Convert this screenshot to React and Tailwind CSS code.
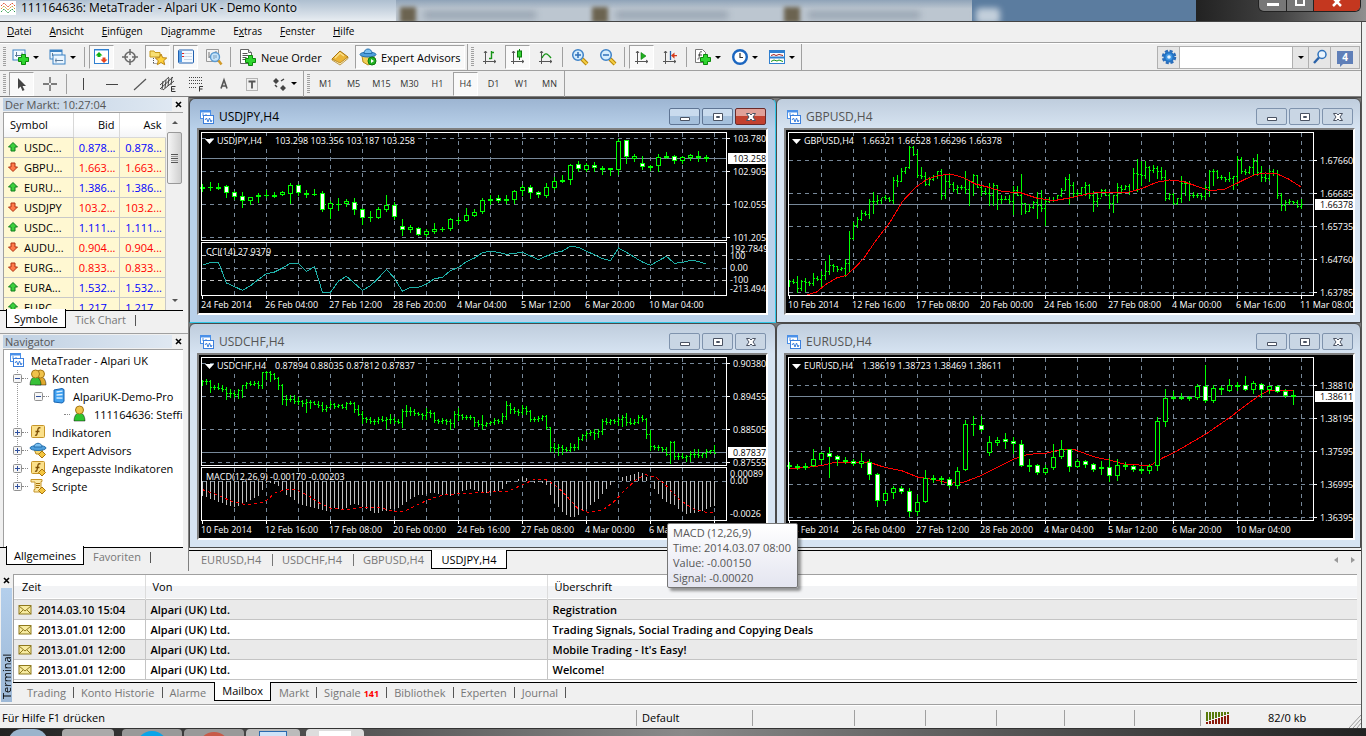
import { useState } from "react";

/* ---------- chart data ---------- */

// Chart data is kept in plotter units, three to a pixel, counted from the top of the window.
// candles: high, body top, body bottom, low, kind (u = up, d = down, x = doji)
const usdjpyCandles = [
  [258, 266, 268, 278, "x"], [252, 268, 268, 276, "x"], [256, 266, 268, 274, "x"], [262, 265, 286, 298, "d"],
  [278, 283, 296, 302, "d"], [282, 295, 308, 326, "d"], [296, 298, 308, 317, "u"], [284, 290, 298, 312, "u"],
  [276, 290, 291, 296, "x"], [282, 290, 292, 296, "x"], [280, 283, 290, 290, "u"], [256, 262, 287, 315, "u"],
  [258, 262, 285, 290, "d"], [276, 285, 287, 298, "x"], [272, 287, 287, 292, "x"], [280, 286, 335, 340, "d"],
  [310, 316, 334, 360, "u"], [300, 317, 318, 335, "x"], [304, 310, 318, 324, "u"], [300, 313, 335, 348, "d"],
  [330, 334, 360, 378, "d"], [340, 357, 358, 370, "x"], [328, 334, 359, 360, "u"], [292, 320, 335, 340, "u"],
  [312, 320, 356, 362, "d"], [362, 384, 396, 412, "d"], [382, 388, 395, 402, "u"], [388, 391, 410, 412, "d"],
  [394, 400, 410, 415, "u"], [376, 394, 402, 405, "u"], [386, 393, 394, 400, "x"], [360, 364, 392, 396, "u"],
  [356, 366, 367, 375, "x"], [330, 352, 368, 368, "u"], [332, 341, 353, 354, "u"], [300, 307, 342, 345, "u"],
  [290, 302, 309, 318, "u"], [292, 301, 310, 312, "d"], [292, 303, 310, 315, "u"], [276, 280, 305, 315, "u"],
  [262, 268, 280, 290, "u"], [262, 268, 284, 300, "d"], [280, 283, 292, 298, "d"], [255, 268, 294, 296, "u"],
  [238, 250, 269, 272, "u"], [232, 247, 249, 252, "x"], [198, 200, 245, 258, "u"], [190, 199, 214, 218, "d"],
  [196, 202, 216, 220, "u"], [192, 202, 209, 220, "d"], [204, 209, 211, 228, "x"], [210, 211, 213, 230, "x"],
  [123, 128, 216, 228, "u"], [126, 127, 177, 196, "d"], [168, 175, 182, 188, "u"], [175, 196, 206, 212, "d"],
  [200, 203, 205, 215, "x"], [168, 178, 204, 218, "u"], [163, 173, 180, 181, "u"], [172, 173, 188, 195, "d"],
  [175, 178, 188, 195, "u"], [168, 172, 179, 186, "u"], [158, 173, 175, 188, "x"], [170, 176, 182, 188, "u"],
];

const eurusdCandles = [
  [420, 429, 431, 438, "x"], [426, 432, 434, 440, "x"], [424, 431, 433, 440, "x"], [380, 412, 431, 432, "u"],
  [390, 394, 413, 424, "u"], [375, 394, 404, 465, "d"], [400, 403, 414, 430, "d"], [405, 414, 416, 424, "x"],
  [412, 416, 426, 430, "d"], [393, 418, 426, 436, "u"], [410, 419, 458, 470, "d"], [453, 457, 537, 552, "d"],
  [505, 512, 537, 542, "u"], [492, 499, 512, 528, "u"], [492, 498, 509, 512, "d"], [498, 508, 570, 582, "d"],
  [520, 539, 570, 580, "u"], [445, 469, 540, 540, "u"], [460, 469, 471, 480, "x"], [462, 469, 471, 482, "x"],
  [465, 470, 491, 496, "d"], [436, 446, 491, 498, "u"], [294, 307, 444, 445, "u"], [282, 307, 308, 338, "x"],
  [282, 310, 323, 328, "d"], [342, 360, 392, 398, "u"], [344, 353, 362, 370, "u"], [333, 352, 359, 378, "d"],
  [345, 358, 365, 394, "d"], [354, 365, 431, 432, "d"], [412, 429, 431, 446, "x"], [425, 430, 453, 456, "d"],
  [430, 437, 452, 456, "u"], [365, 404, 438, 440, "u"], [354, 380, 405, 408, "u"], [380, 382, 435, 446, "d"],
  [412, 418, 435, 436, "u"], [414, 418, 430, 434, "d"], [422, 425, 444, 446, "d"], [416, 434, 441, 455, "u"],
  [408, 434, 462, 476, "d"], [410, 430, 462, 474, "u"], [420, 430, 432, 440, "x"], [428, 432, 444, 446, "d"],
  [432, 441, 443, 452, "x"], [425, 431, 447, 452, "u"], [284, 298, 432, 445, "u"], [201, 227, 299, 312, "u"],
  [208, 224, 226, 232, "x"], [212, 225, 227, 232, "x"], [222, 225, 227, 234, "x"], [186, 193, 227, 232, "u"],
  [130, 193, 237, 240, "d"], [190, 199, 237, 240, "u"], [192, 198, 200, 216, "x"], [170, 190, 207, 207, "u"],
  [180, 189, 191, 205, "x"], [162, 190, 204, 204, "d"], [178, 184, 204, 212, "u"], [182, 187, 204, 224, "d"],
  [190, 192, 204, 214, "u"], [188, 192, 210, 210, "d"], [200, 207, 221, 224, "d"], [204, 220, 222, 246, "x"],
];

// bars: high, low, close
const gbpusdBars = [
  545, 565, 550, 543, 556, 552, 534, 583, 570, 547, 577, 548, 540, 580, 552, 548, 562, 556, 525, 562, 540, 535, 546, 542,
  518, 564, 532, 488, 542, 520, 472, 527, 500, 498, 518, 505, 503, 520, 512, 506, 515, 510, 484, 535, 495, 400, 520, 420,
  372, 424, 382, 358, 386, 364, 335, 365, 344, 340, 350, 348, 303, 360, 310, 283, 345, 310, 290, 318, 306, 300, 315, 297,
  290, 303, 300, 298, 308, 306, 237, 315, 245, 232, 264, 248, 210, 250, 220, 206, 225, 208, 144, 210, 146, 144, 172, 168,
  155, 236, 232, 206, 240, 234, 222, 262, 258, 236, 262, 242, 230, 246, 235, 218, 240, 220, 212, 302, 290, 228, 300, 250,
  225, 268, 258, 253, 280, 272, 262, 284, 268, 262, 272, 268, 218, 285, 272, 250, 320, 250, 228, 292, 232, 230, 268, 268,
  260, 290, 280, 270, 288, 285, 256, 320, 290, 254, 322, 262, 260, 332, 304, 290, 315, 304, 295, 304, 302, 290, 314, 310,
  264, 348, 275, 265, 292, 290, 228, 348, 316, 314, 345, 338, 318, 340, 328, 310, 330, 312, 282, 360, 320, 276, 338, 330,
  300, 380, 308, 298, 312, 305, 296, 308, 305, 290, 300, 292, 270, 294, 275, 236, 275, 242, 228, 318, 262, 252, 298, 285,
  275, 290, 286, 268, 290, 268, 252, 290, 262, 258, 300, 290, 280, 338, 310, 285, 325, 300, 274, 294, 277, 274, 290, 290,
  286, 330, 315, 290, 342, 292, 255, 312, 268, 262, 285, 272, 260, 274, 264, 258, 288, 280, 210, 275, 226, 184, 278, 228,
  188, 262, 230, 190, 240, 208, 204, 248, 215, 202, 222, 210, 205, 240, 218, 206, 242, 238, 215, 306, 300, 284, 302, 288,
  286, 318, 316, 300, 318, 300, 235, 312, 255, 248, 290, 256, 250, 305, 292, 282, 298, 290, 284, 296, 292, 286, 302, 295,
  262, 300, 268, 216, 295, 220, 212, 262, 220, 215, 240, 236, 230, 244, 238, 236, 250, 244, 222, 250, 240, 235, 272, 235,
  175, 260, 182, 178, 225, 218, 212, 228, 222, 205, 225, 208, 180, 232, 190, 168, 232, 222, 205, 250, 238, 228, 250, 240,
  212, 245, 220, 214, 230, 225, 215, 300, 292, 285, 335, 320, 305, 335, 312, 304, 318, 310, 308, 318, 312, 305, 328, 325,
  303, 330, 318,
];

const usdchfBars = [
  175, 190, 178, 170, 186, 178, 174, 210, 196, 188, 202, 195, 184, 200, 198, 190, 206, 200, 195, 230, 214, 202, 226, 213,
  208, 226, 215, 202, 228, 205, 188, 226, 190, 180, 198, 182, 178, 188, 186, 178, 188, 183, 177, 197, 190, 150, 198, 150,
  148, 172, 150, 146, 176, 157, 152, 170, 168, 165, 202, 190, 186, 246, 232, 218, 250, 230, 220, 236, 230, 220, 244, 236,
  225, 246, 238, 235, 252, 242, 232, 270, 240, 235, 258, 240, 236, 246, 245, 236, 256, 250, 240, 266, 262, 248, 268, 254,
  238, 256, 247, 244, 258, 252, 246, 256, 250, 245, 258, 254, 240, 262, 242, 238, 246, 243, 240, 270, 262, 250, 280, 275,
  268, 302, 288, 284, 300, 290, 286, 302, 296, 290, 306, 298, 286, 304, 290, 282, 296, 294, 284, 318, 290, 275, 302, 292,
  284, 302, 296, 290, 302, 300, 262, 314, 268, 250, 282, 266, 254, 278, 268, 262, 278, 274, 270, 280, 276, 272, 290, 278,
  258, 290, 270, 264, 284, 272, 270, 300, 294, 290, 302, 296, 288, 302, 294, 290, 305, 296, 290, 322, 302, 268, 315, 275,
  258, 294, 280, 276, 290, 284, 278, 290, 284, 280, 292, 284, 284, 312, 300, 295, 312, 305, 278, 322, 308, 300, 312, 304,
  298, 306, 300, 288, 306, 294, 290, 304, 298, 274, 302, 282, 236, 290, 248, 244, 272, 262, 256, 274, 268, 262, 278, 270,
  250, 275, 258, 252, 276, 266, 264, 298, 292, 285, 298, 292, 282, 298, 288, 280, 294, 283, 278, 320, 314, 314, 388, 375,
  362, 390, 378, 366, 398, 376, 368, 396, 380, 376, 388, 384, 362, 386, 374, 366, 384, 376, 344, 382, 350, 336, 354, 338,
  326, 348, 332, 324, 340, 330, 322, 350, 332, 320, 346, 326, 290, 335, 298, 288, 306, 300, 290, 306, 295, 290, 304, 297,
  286, 310, 292, 278, 312, 285, 272, 310, 300, 288, 305, 302, 290, 306, 300, 278, 302, 285, 280, 298, 292, 288, 348, 335,
  324, 384, 372, 368, 382, 374, 370, 384, 376, 374, 386, 380, 376, 400, 395, 358, 424, 360, 356, 410, 402, 394, 412, 402,
  394, 408, 404, 400, 416, 402, 386, 418, 396, 380, 404, 396, 382, 404, 398, 392, 406, 394, 382, 404, 388, 384, 394, 385,
  368, 392, 392,
];

const cci = [
  502, 493, 493, 555, 566, 577, 563, 544, 527, 522, 510, 496, 496, 520, 506, 583, 583, 549, 535, 556, 577, 563, 540, 514,
  541, 580, 568, 568, 558, 542, 538, 518, 508, 491, 480, 464, 460, 463, 469, 466, 463, 474, 485, 474, 464, 459, 445, 448,
  460, 470, 482, 488, 450, 463, 478, 492, 502, 488, 475, 496, 493, 487, 490, 499,
];

const macd = [
  523, 525, 530, 534, 540, 543, 548, 552, 556, 552, 545, 540, 535, 528, 522, 505, 482, 484, 486, 492, 505, 518, 525, 534,
  542, 548, 552, 556, 558, 560, 564, 566, 562, 558, 560, 560, 558, 548, 545, 550, 555, 560, 568, 574, 572, 568, 566, 562,
  560, 558, 550, 540, 530, 525, 520, 518, 515, 512, 513, 515, 518, 520, 522, 516, 513, 508, 503, 502, 505, 508, 510, 512,
  512, 510, 506, 500, 486, 480, 478, 470, 466, 468, 478, 484, 480, 482, 490, 520, 542, 556, 570, 580, 585, 585, 578, 568,
  562, 550, 540, 530, 515, 500, 490, 480, 478, 466, 463, 460, 455, 450, 452, 466, 478, 500, 515, 530, 540, 545, 550, 560,
  568, 575, 574, 572, 570, 566, 562, 556, 552,
];

// Line studies: x in pixels, y in plotter units
const gbpusdAverage = [
  [21, 590], [30, 582], [39, 560], [50, 540], [60, 532], [68, 510], [77, 482], [90, 425], [103, 375], [116, 310],
  [129, 268], [140, 245], [152, 232], [165, 229], [176, 238], [189, 258], [201, 267], [216, 280], [235, 285],
  [250, 300], [267, 308], [283, 300], [302, 287], [314, 283], [340, 284], [355, 272], [370, 253], [383, 246],
  [396, 250], [408, 262], [423, 278], [438, 274], [453, 252], [468, 230], [479, 225], [490, 227], [502, 243], [515, 268],
];

const eurusdAverage = [
  [3, 441], [24, 435], [36, 430], [48, 421], [82, 420], [97, 435], [116, 447], [131, 465], [148, 473], [163, 484],
  [178, 480], [195, 460], [212, 434], [227, 412], [241, 397], [259, 394], [276, 382], [289, 384], [308, 405],
  [324, 415], [340, 428], [364, 430], [376, 408], [388, 391], [403, 365], [420, 335], [444, 285], [460, 248],
  [473, 220], [483, 204], [508, 205],
];

const macdSignal = [
  [3, 503], [19, 520], [32, 538], [45, 547], [59, 545], [67, 535], [76, 512], [87, 502], [98, 504], [111, 525],
  [121, 545], [132, 560], [151, 562], [164, 556], [181, 558], [196, 569], [205, 568], [218, 548], [234, 527],
  [245, 518], [267, 514], [290, 510], [309, 507], [324, 487], [335, 472], [346, 472], [356, 490], [367, 522],
  [378, 558], [388, 571], [403, 565], [414, 540], [427, 500], [437, 472], [446, 458], [456, 465], [465, 485],
  [478, 528], [493, 560], [508, 572], [516, 570],
];

const longDates = ["10 Feb 2014", "12 Feb 16:00", "17 Feb 08:00", "20 Feb 00:00", "24 Feb 16:00", "27 Feb 08:00", "4 Mar 00:00", "6 Mar 16:00", "11 Mar 08:00"];
const shortDates = ["24 Feb 2014", "26 Feb 04:00", "27 Feb 12:00", "28 Feb 20:00", "4 Mar 04:00", "5 Mar 12:00", "6 Mar 20:00", "10 Mar 04:00"];

/* ---------- chart parts ---------- */

const GRID = "#778899";
const LIME = "#00ff00";

function Candles({ data, top }) {
  const y = (v) => Math.round(v / 3) - top;
  return data.map(([high, open, close, low, kind], i) => {
    const x = 3.5 + i * 8;
    const h = Math.max(y(close) - y(open), 2);
    return (
      <g key={i} stroke={LIME}>
        <path d={`M${x} ${y(high)}V${y(low) + 1}`} />
        {kind === "x" ? (
          <path d={`M${x - 2.5} ${y(open) + 0.5}h5`} strokeWidth={close - open > 1 ? 2 : 1} />
        ) : (
          <rect x={x - 2} y={y(open) + 0.5} width="4" height={h - 1} fill={kind === "d" ? "#fff" : "#000"} />
        )}
      </g>
    );
  });
}

function Bars({ data, top }) {
  const y = (v) => Math.round(v / 3) - top + 0.5;
  let d = "";
  for (let i = 0; i < data.length; i += 3) {
    const x = 3.5 + (i / 3) * 4;
    const open = i ? data[i - 1] : data[2];
    d += `M${x} ${y(data[i]) - 0.5}V${y(data[i + 1]) + 0.5}M${x - 1.5} ${y(open)}h1M${x} ${y(data[i + 2])}h1.5`;
  }
  return <path d={d} stroke={LIME} fill="none" />;
}

function Study({ points, top, color, dash }) {
  return (
    <polyline
      points={points.map(([x, v]) => `${x + 0.5},${v / 3 - top}`).join(" ")}
      fill="none"
      stroke={color}
      strokeDasharray={dash}
    />
  );
}

function PriceChart({ title, ohlc, quote, quoteY, prices, firstPrice, dates, split, children, sub, subLabels, subTitle }) {
  const bottom = split ? 110.5 : 165.5;
  const columns = Array.from({ length: 16 }, (_, i) => 35.5 + i * 32);
  return (
    <svg
      viewBox="0 0 567 183"
      className="block w-full bg-black font-['Open_Sans',sans-serif] text-[9px]"
      shapeRendering="crispEdges"
    >
      <g stroke={GRID} strokeDasharray="4 4">
        {columns.map((x) => (
          <path key={x} d={split ? `M${x} 3V110M${x} 113V165` : `M${x} 3V165`} />
        ))}
        {prices.map((p, i) => (
          <path key={p} d={`M3 ${firstPrice + i * 33}H527`} />
        ))}
      </g>
      <path d={`M3 ${quoteY}H527`} stroke={GRID} />
      {children}
      {sub}
      <rect x="2.5" y="2.5" width="525" height={bottom - 2.5} fill="none" stroke="#fff" />
      {split && <rect x="2.5" y="112.5" width="525" height="53" fill="none" stroke="#fff" />}
      <rect x="16" y="6" width="203" height="10" fill="#000" />
      <path d="M6 9h9l-4.500 5z" fill="#fff" shapeRendering="auto" />
      <g fill="#fff">
        <text x="18" y="14">{title}</text>
        <text x="76" y="14">{ohlc}</text>
        {subTitle && <text x="7" y="125">{subTitle}</text>}
        {prices.map((p, i) => (
          <g key={p}>
            <path d={`M528 ${firstPrice + i * 33}h3`} stroke="#fff" />
            <text x="534" y={firstPrice + i * 33 + 3}>{p}</text>
          </g>
        ))}
        {subLabels?.map(([label, y]) => (
          <text key={label} x="531" y={y}>{label}</text>
        ))}
        {dates.map((label, i) => (
          <g key={label}>
            <path d={`M${3.5 + i * 64} 166v3`} stroke="#fff" />
            <text x={2 + i * 64} y="178">{label}</text>
          </g>
        ))}
      </g>
      <rect x="529" y={quoteY - 5.5} width="38" height="11" fill="#fff" />
      <text x="534" y={quoteY + 3.5} fill="#000">{quote}</text>
    </svg>
  );
}

function UsdJpy() {
  return (
    <PriceChart
      split
      title="USDJPY,H4"
      ohlc="103.298 103.356 103.187 103.258"
      quote="103.258"
      quoteY={28.5}
      prices={["103.780", "102.905", "102.055", "101.205"]}
      firstPrice={8.5}
      dates={shortDates}
      subTitle="CCI(14) 27.9379"
      subLabels={[["192.7849", 122], ["100", 129], ["0.00", 141], ["-100", 153], ["-213.494", 162]]}
      sub={
        <>
          <path d="M3 125.500H527M3 150.500H527" stroke="#c0c0c0" strokeDasharray="4 4" />
          <path d="M3 138.500H527" stroke={GRID} strokeDasharray="4 4" />
          <Study points={cci.map((v, i) => [3 + i * 8, v])} top={32} color="#20b2aa" />
        </>
      }
    >
      <Candles data={usdjpyCandles} top={32} />
    </PriceChart>
  );
}

function GbpUsd() {
  return (
    <PriceChart
      title="GBPUSD,H4"
      ohlc="1.66321 1.66528 1.66296 1.66378"
      quote="1.66378"
      quoteY={74.5}
      prices={["1.67660", "1.66685", "1.65735", "1.64760", "1.63785"]}
      firstPrice={30.5}
      dates={longDates}
    >
      <Bars data={gbpusdBars} top={32} />
      <Study points={gbpusdAverage} top={32} color="#ff0000" />
    </PriceChart>
  );
}

function UsdChf() {
  return (
    <PriceChart
      split
      title="USDCHF,H4"
      ohlc="0.87894 0.88035 0.87812 0.87837"
      quote="0.87837"
      quoteY={97.5}
      prices={["0.90380", "0.89455", "0.88505", "0.87555"]}
      firstPrice={8.5}
      dates={longDates}
      subTitle="MACD(12,26,9) -0.00170 -0.00203"
      subLabels={[["0.00089", 122], ["0.00", 129], ["-0.0026", 162]]}
      sub={
        <>
          <path d="M3 126.500H527" stroke={GRID} strokeDasharray="4 4" />
          <path d={macd.map((v, i) => `M${3.5 + i * 4} 126V${Math.round(v / 3) - 33}`).join("")} stroke="#c0c0c0" />
          <Study points={macdSignal} top={33} color="#ff0000" dash="3 3" />
        </>
      }
    >
      <Bars data={usdchfBars} top={33} />
    </PriceChart>
  );
}

function EurUsd() {
  return (
    <PriceChart
      title="EURUSD,H4"
      ohlc="1.38619 1.38723 1.38469 1.38611"
      quote="1.38611"
      quoteY={41.5}
      prices={["1.38810", "1.38195", "1.37595", "1.36995", "1.36395"]}
      firstPrice={30.5}
      dates={shortDates}
    >
      <Study points={eurusdAverage} top={33} color="#ff0000" />
      <Candles data={eurusdCandles} top={33} />
    </PriceChart>
  );
}

/* ---------- icons ---------- */

function Icon({ size = 18, children }) {
  return (
    <svg width={size} height={size} viewBox={`0 0 ${size} ${size}`} fill="none" className="shrink-0">
      {children}
    </svg>
  );
}

const Plus = ({ x, y }) => (
  <path d={`M${x + 3.5} ${y + 0.5}h4v3h3v4h-3v3h-4v-3h-3v-4h3z`} fill="#2fd52f" stroke="#0a8a0a" />
);

const Caret = () => <span className="h-0 w-0 border-x-[3px] border-t-[3px] border-x-transparent border-t-black" />;

const ChartsIcon = () => (
  <Icon size={14}>
    <rect x=".5" y=".5" width="10" height="8" fill="#fff" stroke="#4a90e8" />
    <path d="M0 1.500h11" stroke="#4a90e8" strokeWidth="2" />
    <path d="M3 3v3M6 4v2" stroke="#4a90e8" />
    <rect x="3.500" y="5.500" width="10" height="8" fill="#fff" stroke="#3c7fdc" />
    <path d="M5 10l1.500-2 1.500 4 1.500-4 1.500 4 1-2" stroke="#3c7fdc" />
  </Icon>
);

const NewChartIcon = () => (
  <Icon>
    <rect x="1" y="2" width="12" height="10" fill="#f4faff" stroke="#3b82c4" />
    <path d="M4.500 4v5M3 7.500h9M10 4.500v2" stroke="#5c7b98" />
    <Plus x={6} y={6} />
  </Icon>
);
const ProfilesIcon = () => (
  <Icon>
    <rect x="1" y="2" width="12" height="9" fill="#eaf5ff" stroke="#3b82c4" />
    <path d="M1 3h12" stroke="#3b82c4" strokeWidth="2" />
    <rect x="4" y="7" width="12" height="9" fill="#eaf5ff" stroke="#3b82c4" />
    <path d="M3.500 5v3M6 12.500h8M7 10.500v4" stroke="#5c7b98" />
  </Icon>
);
const MarketIcon = () => (
  <Icon>
    <rect x="1.500" y="1.500" width="14" height="14" fill="#fff" stroke="#2f7fd0" />
    <path d="M2 2.500h13" stroke="#9cc8f0" />
    <path d="M6 4l3.500 3.500H7.500V9h-3V7.500H2.500z" fill="#10b010" />
    <path d="M11 15l-3.500-3.500h2V9.500h3v2h2z" fill="#e8431c" />
  </Icon>
);
const CrosshairIcon = () => (
  <Icon>
    <circle cx="9" cy="9" r="5" stroke="#6b6b6b" strokeWidth="1.600" />
    <path d="M9 1v6M9 11v6M1 9h6M11 9h6" stroke="#6b6b6b" strokeWidth="1.500" />
  </Icon>
);
const NavigatorIcon = () => (
  <Icon>
    <path d="M1 3h4l1 1.500h5V9H1z" fill="#f8df72" stroke="#c79a1c" />
    <path d="M4.500 10v6M4.500 15.500h4" stroke="#555" strokeDasharray="1 1" />
    <path d="M12 6l1.700 3.700 4 .3-3 2.700 1 4-3.700-2.200L8.300 16.700l1-4-3-2.700 4-.3z" fill="#ffd23c" stroke="#b98312" />
  </Icon>
);
const TerminalIcon = () => (
  <Icon>
    <rect x="1.500" y="2" width="15" height="13" rx="1" fill="#f4f9ff" stroke="#1f5fae" />
    <path d="M2 3h3v11H2z" fill="#5aa0e6" />
    <path d="M7 5.500h8M7 8.500h8M7 11.500h8" stroke="#c9d6e6" />
    <path d="M5 5.500h2M5 8.500h2" stroke="#e02020" />
  </Icon>
);
const TesterIcon = () => (
  <Icon>
    <path d="M1.500 1.500h12v12h-12z" fill="#f3f3f3" stroke="#999" />
    <path d="M4 4v6M4 9h4M11 3v4" stroke="#777" />
    <circle cx="10" cy="9" r="4.500" fill="#c4e4fb" stroke="#5c9ad0" strokeWidth="1.400" />
    <path d="M9 7v4M11 7v3" stroke="#7d9ab5" />
    <path d="M13.500 12.500l3 4" stroke="#d19a2a" strokeWidth="2.500" />
  </Icon>
);
const OrderIcon = () => (
  <Icon>
    <path d="M1.500 1.500h8l3 3v11h-11z" fill="#fff" stroke="#666" />
    <path d="M9.500 1.500v3h3" fill="#ddd" stroke="#666" />
    <path d="M3.500 5.500h5M3.500 7.500h6M3.500 9.500h4M3.500 11.500h3" stroke="#555" />
    <Plus x={6} y={7} />
  </Icon>
);
const EditorIcon = () => (
  <Icon>
    <path d="M1 11L9 3l8 6-8 7z" fill="#eab437" stroke="#a8740c" />
    <path d="M1 11l8 4 8-6v1.500L9 17 1 12z" fill="#fff4c8" stroke="#a8740c" strokeWidth=".7" />
    <path d="M4 10l5-5 4 3" stroke="#fbe08a" strokeWidth="1.500" />
  </Icon>
);
const ExpertIcon = () => (
  <Icon>
    <path d="M3 8h12l-1 6-5 3-5-3z" fill="#f3cf55" stroke="#b98a1c" />
    <ellipse cx="9" cy="6.500" rx="8" ry="2.500" fill="#4f9fdc" stroke="#2470ad" />
    <path d="M5 5.500c0-6 8-6 8 0z" fill="#7cc0f0" stroke="#2470ad" />
    <circle cx="13" cy="13" r="4" fill="#22b022" stroke="#0c7a0c" />
    <path d="M12 11l3 2-3 2z" fill="#fff" />
  </Icon>
);
const Axes = () => <path d="M4.500 3v13M2 13.500h13M3 5l1.500-2L6 5M13 12l2 1.500-2 1.500" stroke="#555" />;
const BarsIcon = () => (
  <Icon><Axes /><path d="M10.500 3v8M10.500 4.500H13M8 10.500h2.500" stroke="#179417" strokeWidth="1.400" /></Icon>
);
const CandleIcon = () => (
  <Icon><Axes /><path d="M10.500 1v11" stroke="#0a7a0a" /><rect x="8.500" y="3" width="4" height="6" fill="#34d034" stroke="#0a7a0a" /></Icon>
);
const LineIcon = () => (
  <Icon><Axes /><path d="M5 10c3-6 5-5 9 0" stroke="#179417" strokeWidth="1.400" /></Icon>
);
const ZoomIcon = ({ plus }) => (
  <Icon>
    <path d="M11 11l5 5" stroke="#b8860b" strokeWidth="4" />
    <path d="M11 11l5 5" stroke="#f5cf45" strokeWidth="2" />
    <circle cx="7" cy="7" r="5.300" fill="#d5edfd" stroke="#3f83c8" strokeWidth="1.500" />
    <path d={plus ? "M4 7h6M7 4v6" : "M4 7h6"} stroke="#2f6fb8" strokeWidth="1.500" />
  </Icon>
);
const ScrollIcon = () => (
  <Icon><Axes /><path d="M8 4.500v7l5-3.500z" fill="#1eb01e" stroke="#0a7a0a" strokeWidth=".6" /></Icon>
);
const ShiftIcon = () => (
  <Icon><Axes /><path d="M9.500 3v9" stroke="#1f5fae" strokeWidth="1.300" /><path d="M10 7.500l3.500-3V7H16v1.200h-2.500v2.500z" fill="#d43a1a" /></Icon>
);
const IndicatorIcon = () => (
  <Icon>
    <path d="M1.500 1.500h7l3 3v10h-10z" fill="#fff" stroke="#777" />
    <path d="M8 4c-2-1-2 0-2.500 3S5 12 3.500 11M4 7h4" stroke="#444" />
    <Plus x={6} y={6} />
  </Icon>
);
const ClockIcon = () => (
  <Icon>
    <circle cx="9" cy="9" r="6.800" fill="#fff" stroke="#1b66c0" strokeWidth="2.400" />
    <path d="M9 5v4.500h3" stroke="#333" strokeWidth="1.200" />
  </Icon>
);
const TemplateIcon = () => (
  <Icon>
    <rect x="1.500" y="2.500" width="15" height="13" fill="#fff" stroke="#2f7fd0" />
    <path d="M2 4h14M2 9.500h14" stroke="#2f7fd0" strokeWidth="2" />
    <path d="M3 7.500l3-1 2 1 3-1 4 1" stroke="#a02020" />
    <path d="M3 13.500l3-1.500 3 1 2-1 4 1.500" stroke="#179417" />
  </Icon>
);

const CursorIcon = () => <Icon><path d="M5 3v11l2.600-2.400 1.900 4.300 2-1-2-4H13z" fill="#444" /></Icon>;
const CrossIcon = () => <Icon><path d="M9 2v6M9 10v6M2 9h6M10 9h6" stroke="#555" strokeWidth="1.300" /></Icon>;
const VLineIcon = () => <Icon><path d="M8.500 3v12" stroke="#444" /></Icon>;
const HLineIcon = () => <Icon><path d="M3 9.500h12" stroke="#444" /></Icon>;
const TrendIcon = () => <Icon><path d="M3 15L15 4" stroke="#555" strokeWidth="1.200" /></Icon>;
const ChannelIcon = () => (
  <Icon>
    <path d="M1 14L14 2M1 10L10 2M4 15L15 6M4 6l-1 9M7 5L6 13M10 3L9 11M13 2l-1 8" stroke="#444" />
    <path d="M16.500 11.500h-4v5h4M12.500 14h3" stroke="#333" />
  </Icon>
);
const FiboIcon = () => (
  <Icon>
    <path d="M2 2.500h14M2 5.500h14M2 8.500h14M2 12.500h8" stroke="#444" strokeDasharray="1 1" />
    <path d="M16 11.500h-3.500v5M12.500 14h3" stroke="#333" />
  </Icon>
);
const LetterIcon = () => <Icon><path d="M6 13.500L9 5l3 8.500M7 11h4" stroke="#555" strokeWidth="1.600" /></Icon>;
const LabelIcon = () => (
  <Icon>
    <rect x="3.500" y="3.500" width="11" height="12" stroke="#777" strokeDasharray="1 1" />
    <path d="M5.500 6.500h7M9 6.500v7" stroke="#555" strokeWidth="1.800" />
  </Icon>
);
const ArrowsIcon = () => (
  <Icon>
    <path d="M6 3l3 3-3 3-3-3zM13 10l3 3-3 3-3-3z" fill="#444" />
    <path d="M7 12l-2-2M11 6l3-2" stroke="#444" strokeWidth="1.500" />
  </Icon>
);

const UpArrow = () => (
  <Icon size={12}><path d="M6 1.500l4.500 4.500H8v4H4V6H1.500z" fill="#3ccf3c" stroke="#0c7d1c" /></Icon>
);
const DownArrow = () => (
  <Icon size={12}><path d="M6 10.500L1.500 6H4V2h4v4h2.500z" fill="#ff7a4a" stroke="#b03010" /></Icon>
);

const Person = ({ x, shirt }) => (
  <>
    <path d={`M${x} 16c0-11 11-11 11 0z`} fill={shirt} stroke="#00000070" />
    <circle cx={x + 5.5} cy="5" r="4" fill="#f0c24a" stroke="#a57616" />
  </>
);
const AccountsIcon = () => <Icon><Person x={6} shirt="#e0a92c" /><Person x={1} shirt="#38c038" /></Icon>;
const AccountIcon = () => <Icon><Person x={3} shirt="#2fc42f" /></Icon>;
const ServerIcon = () => (
  <Icon>
    <path d="M4 3l8-1.500 2 1v12L12 16l-8-1z" fill="#3fa0f0" stroke="#1763b0" />
    <path d="M6.500 5l6-.8M6.500 8l6-.5M6.500 11l6 .2" stroke="#d8eeff" strokeWidth="1.300" />
  </Icon>
);
const FunctionIcon = ({ badge }) => (
  <Icon>
    <rect x="2.500" y="2.500" width="13" height="12" rx="1" fill="#fbe08a" stroke="#c6952a" />
    <path d="M11.500 5c-2.500-1-2.500 1-3 3.500S8 13 6 12M6.500 8.500h4" stroke="#7b4d05" strokeWidth="1.300" />
    {badge && <path d="M13 10l3.500 3.500L13 17l-3.500-3.500z" fill="#f4c640" stroke="#a8740c" />}
  </Icon>
);
const AdvisorIcon = () => (
  <Icon>
    <path d="M5 8h9l-2 5H7z" fill="#f5d877" stroke="#b98a1c" />
    <ellipse cx="9" cy="7" rx="8" ry="2.500" fill="#4f9fdc" stroke="#2470ad" />
    <path d="M5 6c0-5 8-5 8 0z" fill="#7cc0f0" stroke="#2470ad" />
    <path d="M13 10l3.500 3.500L13 17l-3.500-3.500z" fill="#f4c640" stroke="#a8740c" />
  </Icon>
);
const ScriptIcon = () => (
  <Icon>
    <path d="M2 2.500h11v2H12V13h3v2H5v-2.500h1V5H2z" fill="#fbe9a8" stroke="#c6952a" />
    <path d="M7 6.500h4M7 8.500h4M7 10.500h3" stroke="#a8740c" />
    <path d="M13 10l3.500 3.500L13 17l-3.500-3.500z" fill="#f4c640" stroke="#a8740c" />
  </Icon>
);
const MailIcon = () => (
  <Icon size={14}>
    <rect x="1" y="3.500" width="12" height="8.500" fill="#f7eba2" stroke="#8f7a1e" />
    <path d="M1 4l6 5 6-5M1 12l4-4M13 12L9 8" stroke="#8f7a1e" />
  </Icon>
);
const GearIcon = () => (
  <Icon>
    <circle cx="9" cy="9" r="6" stroke="#2b6cb8" strokeWidth="2.500" strokeDasharray="3 1.700" />
    <circle cx="9" cy="9" r="4.500" fill="#3f97e4" stroke="#2473c4" strokeWidth="2" />
    <circle cx="9" cy="9" r="1.800" fill="#e6f3ff" />
  </Icon>
);
const SearchIcon = () => (
  <Icon>
    <path d="M8 9.500L3 15" stroke="#2b62a8" strokeWidth="2.400" />
    <circle cx="11" cy="6.500" r="4" fill="#eaf5ff" stroke="#2f73bd" strokeWidth="1.500" />
  </Icon>
);

/* ---------- toolbar ---------- */

const Grip = () => (
  <span className="ml-[3px] h-5 w-[3px] bg-[repeating-linear-gradient(#a0a0a0_0_1px,#f0f0f0_1px_2px)]" />
);
const Sep = () => <span className="mx-px h-5 w-px bg-[#a0a0a0]" />;

function Tool({ label, pressed, wide, children }) {
  return (
    <button
      type="button"
      aria-label={label}
      className={`flex h-6 shrink-0 items-center border ${wide ? "w-[34px] justify-between pl-[2px] pr-[3px]" : "w-[25px] justify-center"} ${
        pressed ? "border-[#a0a0a0] border-r-white border-b-white bg-[#f9f9f9]" : "border-transparent"
      }`}
    >
      {children}
      {wide && <Caret />}
    </button>
  );
}

const toolbarGroup = "flex h-[26px] items-center gap-[3px] border-r border-[#a0a0a0]";

function StandardToolbar() {
  return (
    <div className="flex h-[27px] items-center border-t border-white">
      <div className={`${toolbarGroup} pr-[2px]`}>
        <Grip />
        <Tool label="Neuer Chart" wide><NewChartIcon /></Tool>
        <Tool label="Profile" wide><ProfilesIcon /></Tool>
        <Sep />
        <Tool label="Marktübersicht" pressed><MarketIcon /></Tool>
        <Tool label="Datenfenster"><CrosshairIcon /></Tool>
        <Tool label="Navigator" pressed><NavigatorIcon /></Tool>
        <Tool label="Terminal" pressed><TerminalIcon /></Tool>
        <Tool label="Strategietester"><TesterIcon /></Tool>
        <Sep />
        <button type="button" className="flex h-6 w-[89px] items-center gap-1 pl-1">
          <OrderIcon />
          <span className="whitespace-nowrap">Neue Order</span>
        </button>
        <Tool label="MetaEditor"><EditorIcon /></Tool>
        <button
          type="button"
          className="flex h-6 w-[110px] items-center gap-1 border border-[#a0a0a0] border-r-white border-b-white bg-[#f9f9f9] pl-[3px]"
        >
          <ExpertIcon />
          <span className="whitespace-nowrap">Expert Advisors</span>
        </button>
      </div>
      <div className={`${toolbarGroup} pr-[2px]`}>
        <Grip />
        <Tool label="Balken"><BarsIcon /></Tool>
        <Tool label="Kerzen" pressed><CandleIcon /></Tool>
        <Tool label="Linie"><LineIcon /></Tool>
        <Sep />
        <Tool label="Vergrößern"><ZoomIcon plus /></Tool>
        <Tool label="Verkleinern"><ZoomIcon /></Tool>
        <Sep />
        <Tool label="Auto-Scroll" pressed><ScrollIcon /></Tool>
        <Tool label="Chart verschieben"><ShiftIcon /></Tool>
        <Sep />
        <Tool label="Indikatoren" wide><IndicatorIcon /></Tool>
        <Tool label="Zeiträume" wide><ClockIcon /></Tool>
        <Tool label="Vorlagen" wide><TemplateIcon /></Tool>
      </div>
      <div className="mr-px ml-auto flex h-[23px] border border-[#b0b0b0] bg-[#e6e6e6]">
        <button type="button" aria-label="Einstellungen" className="flex w-[21px] items-center justify-center"><GearIcon /></button>
        <input aria-label="Suche" className="w-[114px] border-x border-[#b0b0b0] bg-white px-1 outline-none" />
        <button type="button" aria-label="Suchverlauf" className="flex w-[15px] items-center justify-center"><Caret /></button>
        <button type="button" aria-label="Suchen" className="flex w-[23px] items-center justify-center border-x border-[#b0b0b0]"><SearchIcon /></button>
        <button type="button" className="flex w-[28px] items-center justify-center">
          <span className="relative h-[13px] w-4 bg-[#5f7fb8] text-[10px] leading-[13px] font-bold text-white">
            4
            <span className="absolute top-full left-[3px] h-0 w-0 border-t-[3px] border-r-[3px] border-t-[#5f7fb8] border-r-transparent" />
          </span>
        </button>
      </div>
    </div>
  );
}

function DrawingToolbar() {
  const [period, setPeriod] = useState("H4");
  return (
    <div className="flex h-[26px] items-center border-t border-[#a0a0a0]">
      <div className={`${toolbarGroup} pr-[2px]`}>
        <Grip />
        <Tool label="Zeiger" pressed><CursorIcon /></Tool>
        <Tool label="Fadenkreuz"><CrossIcon /></Tool>
        <Sep />
        <Tool label="Vertikale Linie"><VLineIcon /></Tool>
        <Tool label="Horizontale Linie"><HLineIcon /></Tool>
        <Tool label="Trendlinie"><TrendIcon /></Tool>
        <Tool label="Kanal"><ChannelIcon /></Tool>
        <Tool label="Fibonacci"><FiboIcon /></Tool>
        <Tool label="Text"><LetterIcon /></Tool>
        <Tool label="Textmarke"><LabelIcon /></Tool>
        <Tool label="Pfeile" wide><ArrowsIcon /></Tool>
      </div>
      <div className={`${toolbarGroup} pr-[2px]`}>
        <Grip />
        {["M1", "M5", "M15", "M30", "H1", "H4", "D1", "W1", "MN"].map((p) => (
          <button
            key={p}
            type="button"
            onClick={() => setPeriod(p)}
            className={`flex h-6 w-[25px] items-center justify-center border text-[9px] text-[#333] ${
              p === period ? "border-[#a0a0a0] border-r-white border-b-white bg-[#f9f9f9]" : "border-transparent"
            }`}
          >
            {p}
          </button>
        ))}
      </div>
    </div>
  );
}

/* ---------- side panels ---------- */

const CloseButton = () => (
  <button type="button" aria-label="Schließen" className="flex h-3 w-3 shrink-0 items-center justify-center">
    <svg width="7" height="7" viewBox="0 0 7 7"><path d="M1 1l5 5M6 1L1 6" stroke="#000" strokeWidth="1.600" /></svg>
  </button>
);

function PanelHeader({ title }) {
  return (
    <div className="flex h-[15px] items-center pr-1 pl-[3px]">
      <h2 className="flex h-[13px] flex-1 items-center bg-linear-to-r from-[#bfd0e2] to-[#dfe8f2] pl-[2px] text-[#555]">{title}</h2>
      <CloseButton />
    </div>
  );
}

function PanelTabs({ active, other }) {
  return (
    <div className="flex h-[18px]">
      <span className="w-[6px] border-t border-black" />
      <button type="button" className="-mt-px border border-t-0 border-black bg-white px-[7px] pt-px">{active}</button>
      <button type="button" className="border-t border-black pl-[9px] text-[#777]">{other}</button>
      <span className="mr-[5px] flex-1 border-t border-black pt-[4px] pl-[9px]">
        <span className="block h-[11px] w-px bg-[#555]" />
      </span>
    </div>
  );
}

const quotes = [
  ["USDC...", "0.878...", true],
  ["GBPU...", "1.663...", false],
  ["EURU...", "1.386...", true],
  ["USDJPY", "103.2...", false],
  ["USDC...", "1.111...", true],
  ["AUDU...", "0.904...", false],
  ["EURG...", "0.833...", false],
  ["EURA...", "1.532...", true],
  ["EURC...", "1.217...", true],
];

function MarketWatch() {
  return (
    <section className="flex flex-col pb-[5px]">
      <PanelHeader title="Der Markt: 10:27:04" />
      <div className="mr-[5px] ml-[3px] flex h-[198px] overflow-hidden border-t border-l border-[#a0a0a0] bg-white">
        <table className="h-[205px] flex-1 table-fixed border-collapse self-start">
          <thead>
            <tr className="h-6 bg-linear-to-b from-white from-50% to-[#f4f5f7]">
              <th className="w-[69px] border-b border-[#c8c8c8] pl-[6px] text-left font-normal">Symbol</th>
              <th className="w-[46px] border-b border-l border-[#d8d8d8] pr-1 text-right font-normal">Bid</th>
              <th className="border-b border-l border-[#d8d8d8] pr-1 text-right font-normal">Ask</th>
            </tr>
          </thead>
          <tbody>
            {quotes.map(([symbol, price, up], i) => (
              <tr key={i} className="h-5 border-b border-[#c8c8c8] bg-[#fff8d2]">
                <td className="whitespace-nowrap">
                  <span className="flex items-center gap-[5px] pl-[3px]">{up ? <UpArrow /> : <DownArrow />}{symbol}</span>
                </td>
                <td className={`border-l border-[#c8c8c8] pr-[3px] text-right ${up ? "text-[#0000ff]" : "text-[#ff0000]"}`}>{price}</td>
                <td className={`border-x border-[#c8c8c8] pr-[3px] text-right ${up ? "text-[#0000ff]" : "text-[#ff0000]"}`}>{price}</td>
              </tr>
            ))}
          </tbody>
        </table>
        <div className="flex w-[17px] flex-col items-center bg-[#f0f0f0] py-2">
          <span className="border-x-[3px] border-b-[3px] border-x-transparent border-b-[#555]" />
          <span className="mt-2 flex h-[52px] w-[15px] flex-col items-center justify-center gap-px rounded-xs border border-[#999] bg-linear-to-r from-[#f5f5f5] to-[#cfcfcf]">
            <span className="h-px w-[7px] bg-[#555]" />
            <span className="h-px w-[7px] bg-[#999]" />
            <span className="h-px w-[7px] bg-[#555]" />
            <span className="h-px w-[7px] bg-[#999]" />
            <span className="h-px w-[7px] bg-[#555]" />
          </span>
          <span className="mt-auto border-x-[3px] border-t-[3px] border-x-transparent border-t-[#555]" />
        </div>
      </div>
      <PanelTabs active="Symbole" other="Tick Chart" />
    </section>
  );
}

const Expander = ({ open }) => (
  <Icon size={9}>
    <rect x=".5" y=".5" width="8" height="8" rx="1" fill="#f6f6f6" stroke="#919191" />
    <path d={open ? "M2 4.500h5" : "M2 4.500h5M4.500 2v5"} stroke="#2e4f9e" />
  </Icon>
);
const Dots = () => <span className="w-[6px] border-t border-dotted border-[#888]" />;

function TreeRow({ open, icon, label, indent }) {
  return (
    <li className={`flex h-[18px] items-center whitespace-nowrap ${indent}`}>
      {open !== undefined && <Expander open={open} />}
      <Dots />
      <span className="mr-[5px] ml-px">{icon}</span>
      {label}
    </li>
  );
}

function Navigator() {
  return (
    <section className="flex flex-1 flex-col border-t border-[#a0a0a0] pb-[6px]">
      <PanelHeader title="Navigator" />
      <ul className="mr-[5px] ml-[3px] flex-1 overflow-hidden border-t border-l border-[#a0a0a0] bg-white bg-[repeating-linear-gradient(#999_0_1px,#fff_1px_2px)] bg-[length:1px_118px] bg-[position:13px_20px] bg-no-repeat pt-px">
        <li className="flex h-[18px] items-center gap-[7px] pl-[6px]"><ChartsIcon />MetaTrader - Alpari UK</li>
        <TreeRow indent="pl-[9px]" open icon={<AccountsIcon />} label="Konten" />
        <TreeRow indent="pl-[30px]" open icon={<ServerIcon />} label="AlpariUK-Demo-Pro" />
        <TreeRow indent="pl-[60px]" icon={<AccountIcon />} label="111164636: Steffi" />
        <TreeRow indent="pl-[9px]" open={false} icon={<FunctionIcon />} label="Indikatoren" />
        <TreeRow indent="pl-[9px]" open={false} icon={<AdvisorIcon />} label="Expert Advisors" />
        <TreeRow indent="pl-[9px]" open={false} icon={<FunctionIcon badge />} label="Angepasste Indikatoren" />
        <TreeRow indent="pl-[9px]" open={false} icon={<ScriptIcon />} label="Scripte" />
      </ul>
      <PanelTabs active="Allgemeines" other="Favoriten" />
    </section>
  );
}

/* ---------- chart windows ---------- */

function WindowButton({ label, danger, muted, children }) {
  return (
    <button
      type="button"
      aria-label={label}
      className={`flex h-[17px] w-[31px] items-center justify-center rounded-xs border ${
        danger
          ? "border-[#6a2a2a] bg-linear-to-b from-[#e0a098] from-50% to-[#c2412f] to-50%"
          : muted
            ? "border-[#7f93ad] bg-[#c9d6e4]"
            : "border-[#5f7594] bg-linear-to-b from-[#c9dbee] from-50% to-[#a5c0dc] to-50%"
      }`}
    >
      <svg width="12" height="10" viewBox="0 0 12 10" fill="#fff" stroke="#4a5262">{children}</svg>
    </button>
  );
}

function ChartWindow({ title, active, last, children }) {
  return (
    <section
      className={`flex flex-col rounded-t-md border border-[#4a4a4a] pl-[7px] ${last ? "pr-[5px]" : "pr-[7px]"} pb-[7px] ${
        active ? "border-r-[#30c8e8] border-b-[#30c8e8] bg-linear-to-b from-[#9db5d2] to-[#b9d1ea] to-[30px]" : "bg-linear-to-b from-[#bfcddd] to-[#d7e4f2] to-[30px]"
      }`}
    >
      <header className="flex h-[29px] items-center pt-[6px] pr-[2px] pl-[3px]">
        <ChartsIcon />
        <h2 className={`ml-[5px] flex-1 text-[12px] ${active ? "text-black" : "text-[#555]"}`}>{title}</h2>
        <div className="flex gap-[2px]">
          <WindowButton label="Minimieren" muted={!active}><path d="M1.500 5.500h9v3h-9z" /></WindowButton>
          <WindowButton label="Maximieren" muted={!active}><path d="M1.500 1.500h9v7h-9zM4.500 4.500h3v1h-3z" /></WindowButton>
          <WindowButton label="Schließen" muted={!active} danger={active}>
            <path d="M1.500 1.500h3L6 3l1.500-1.500h3L8 5l2.500 3.500h-3L6 7 4.500 8.500h-3L4 5z" />
          </WindowButton>
        </div>
      </header>
      <div className="border-2 border-t-[#808080] border-r-white border-b-white border-l-[#808080]">{children}</div>
    </section>
  );
}

function Workspace() {
  return (
    <main className="flex min-w-0 flex-1 flex-col border-l border-[#808080]">
      <div className="grid grid-cols-[587fr_585fr] border-t border-[#4a4a4a] bg-[#777]">
        <ChartWindow title="USDJPY,H4" active><UsdJpy /></ChartWindow>
        <ChartWindow title="GBPUSD,H4" last><GbpUsd /></ChartWindow>
        <ChartWindow title="USDCHF,H4"><UsdChf /></ChartWindow>
        <ChartWindow title="EURUSD,H4" last><EurUsd /></ChartWindow>
      </div>
      <nav className="mt-[2px] flex h-[21px] border-t border-black pl-[3px] text-[#777]">
        {["EURUSD,H4", "USDCHF,H4", "GBPUSD,H4"].map((t, i) => (
          <button key={t} type="button" className="flex w-[81px] items-center justify-between pb-[3px] pl-[9px]">
            {t}
            {i < 2 && <span className="h-3 w-px bg-[#777]" />}
          </button>
        ))}
        <button type="button" className="-mt-px -ml-[4px] mb-[2px] w-[76px] border border-t-0 border-black bg-white text-black">USDJPY,H4</button>
        <span className="ml-auto flex items-center gap-[13px] pr-[6px] pb-[2px]">
          <span className="border-y-[3px] border-r-[4px] border-y-transparent border-r-[#999]" />
          <span className="border-y-[3px] border-l-[4px] border-y-transparent border-l-[#999]" />
        </span>
      </nav>
    </main>
  );
}

function MacdTooltip() {
  return (
    <div
      role="tooltip"
      className="absolute top-[523px] left-[667px] h-[65px] w-[131px] rounded-xs border border-[#767676] bg-linear-to-b from-white to-[#e4e5f0] pt-px pl-[5px] text-[11px] leading-[15px] whitespace-nowrap text-[#575757] shadow-[3px_3px_3px_rgba(0,0,0,0.4)]"
    >
      <p>MACD (12,26,9)</p>
      <p>Time: 2014.03.07 08:00</p>
      <p>Value: -0.00150</p>
      <p>Signal: -0.00020</p>
    </div>
  );
}

/* ---------- terminal ---------- */

const mails = [
  ["2014.03.10 15:04", "Registration"],
  ["2013.01.01 12:00", "Trading Signals, Social Trading and Copying Deals"],
  ["2013.01.01 12:00", "Mobile Trading - It's Easy!"],
  ["2013.01.01 12:00", "Welcome!"],
];

function TerminalTab({ label, badge }) {
  return (
    <button type="button" className="flex items-center text-[#777]">
      {label}
      {badge && <span className="pt-[3px] pl-[3px] text-[9px] font-bold text-[#ff0000]">{badge}</span>}
    </button>
  );
}
const Bar = () => <span className="mx-[7px] h-[11px] w-px self-center bg-[#555]" />;

function Terminal() {
  return (
    <section className="flex h-[134px] border-b border-[#a0a0a0] pt-[3px] pb-px">
      <div className="flex w-[13px] flex-col items-center">
        <CloseButton />
        <h2 className="mt-[2px] mb-px flex w-[11px] flex-1 rotate-180 items-center bg-linear-to-b from-[#9db8d6] to-[#b4cfec] pt-[3px] text-black [writing-mode:vertical-rl]">
          Terminal
        </h2>
      </div>
      <div className="mr-1 flex min-w-0 flex-1 flex-col">
        <div className="border-t border-l border-[#a0a0a0] bg-white pb-[2px]">
          <table className="w-full table-fixed border-collapse">
            <thead>
              <tr className="h-6 border-b border-[#c8c8c8] bg-linear-to-b from-white from-50% to-[#f2f3f5] to-50% text-left">
                <th className="w-[131px] pl-2 font-normal">Zeit</th>
                <th className="w-[402px] border-l border-[#dcdcdc] pl-[7px] font-normal">Von</th>
                <th className="border-l border-[#dcdcdc] pl-[7px] font-normal">Überschrift</th>
              </tr>
            </thead>
            <tbody className="font-semibold">
              {mails.map(([time, subject]) => (
                <tr key={subject} className="h-5 border-b border-[#c4c4c4] odd:bg-[#eaeaea]">
                  <td><span className="flex items-center gap-[6px] pl-[4px]"><MailIcon />{time}</span></td>
                  <td className="border-l border-[#c4c4c4] pl-[5px]">Alpari (UK) Ltd.</td>
                  <td className="border-l border-[#c4c4c4] pl-[5px]">{subject}</td>
                </tr>
              ))}
            </tbody>
          </table>
        </div>
        <nav className="flex h-[20px] border-t border-black pl-[14px]">
          <TerminalTab label="Trading" /><Bar />
          <TerminalTab label="Konto Historie" /><Bar />
          <TerminalTab label="Alarme" />
          <button type="button" className="-mt-px mr-[8px] mb-px ml-[8px] border border-t-0 border-black bg-white px-[7px]">Mailbox</button>
          <TerminalTab label="Markt" /><Bar />
          <TerminalTab label="Signale" badge="141" /><Bar />
          <TerminalTab label="Bibliothek" /><Bar />
          <TerminalTab label="Experten" /><Bar />
          <TerminalTab label="Journal" /><Bar />
        </nav>
      </div>
    </section>
  );
}

function StatusBar() {
  const cell = "h-4 border-l border-[#a0a0a0]";
  return (
    <footer className="flex h-[23px] items-center border-t border-white pt-px">
      <p className="flex-1 pl-[2px]">Für Hilfe F1 drücken</p>
      <p className={`${cell} w-[116px] pl-[5px]`}>Default</p>
      <span className={`${cell} w-[102px]`} />
      <span className={`${cell} w-[71px]`} />
      <span className={`${cell} w-[71px]`} />
      <span className={`${cell} w-[68px]`} />
      <span className={`${cell} w-[70px]`} />
      <span className={`${cell} w-[66px]`} />
      <p className={`${cell} flex w-[149px] items-center pl-[5px]`}>
        <svg width="24" height="12" viewBox="0 0 24 12">
          {[0, 1, 2, 3, 4, 5, 6, 7].map((i) => (
            <g key={i}>
              <rect x={i * 3} y="0" width="2" height={9 - i} fill="#5a7a0a" />
              <rect x={i * 3} y={10 - i} width="2" height={2 + i} fill="#8b1a0a" />
            </g>
          ))}
        </svg>
        <span className="ml-[38px]">82/0 kb</span>
      </p>
      <svg width="12" height="14" viewBox="0 0 12 14" className="self-end" stroke="#999">
        <path d="M0 14L12 1M4 14l8-9M8 14l4-5" />
      </svg>
    </footer>
  );
}

/* ---------- frame ---------- */

function TitleBar() {
  return (
    <div className="relative flex h-[22px] shrink-0 overflow-hidden border-b border-[#444] bg-[#5b7c9f]">
      <div className="w-[396px] shrink-0 bg-linear-to-b from-[#aebfd0] to-[#e8edf2]" />
      {[0, 1, 2].map((i) => (
        <div key={i} className="flex h-[22px] w-48 shrink-0 items-center gap-2 bg-linear-to-b from-[#8fa3b8] to-[#bcc6d0] to-40% pt-2 pl-1">
          <span className="h-4 w-4 bg-[#6b6350] blur-[2px]" />
          <span className="h-2 w-28 bg-[#9ba7b4] blur-[3px]" />
        </div>
      ))}
      <span className="mt-2 ml-1 h-4 w-6 rounded bg-[#c3cfdb] blur-[3px]" />
      <div className="ml-auto w-[170px] shrink-0 bg-linear-to-r from-[#222] via-[#444] to-[#909090]" />
      <h1 className="absolute top-0 left-0 flex items-center text-[12px] leading-[15px] whitespace-nowrap text-black [text-shadow:0_0_6px_#fff]">
        <svg width="16" height="14" viewBox="0 0 16 14" fill="none" className="mr-[5px] bg-white">
          <path d="M1 5l3-3 4 4 4-4 3 3" stroke="#e05030" strokeDasharray="2 1" />
          <path d="M1 8l3-3 4 4 4-4 3 3" stroke="#d0a030" strokeDasharray="2 1" />
          <path d="M1 11l3-3 4 4 4-4 3 3" stroke="#30a050" strokeDasharray="2 1" />
        </svg>
        111164636: MetaTrader - Alpari UK - Demo Konto
      </h1>
      <div className="absolute top-0 right-[5px] flex h-[12px] overflow-hidden rounded-b-md border border-t-0 border-[#222]">
        <button type="button" aria-label="Minimieren" className="flex w-7 justify-center border-r border-[#222] bg-[#777] pt-[3px]">
          <span className="h-[3px] w-3 bg-white" />
        </button>
        <button type="button" aria-label="Maximieren" className="flex w-[27px] justify-center border-r border-[#222] bg-[#777]">
          <span className="h-[6px] w-[10px] border-2 border-t-0 border-white" />
        </button>
        <button type="button" aria-label="Schließen" className="flex w-[46px] justify-center bg-[#c4371f]">
          <svg width="12" height="8" viewBox="0 0 12 8"><path d="M2 -2l8 8M10 -2L2 6" stroke="#fff" strokeWidth="2.500" /></svg>
        </button>
      </div>
    </div>
  );
}

const menu = [["", "D", "atei"], ["", "A", "nsicht"], ["", "E", "infügen"], ["D", "i", "agramme"], ["E", "x", "tras"], ["", "F", "enster"], ["", "H", "ilfe"]];

function MenuBar() {
  return (
    <nav className="flex h-[21px] items-center gap-[18px] border-b border-[#a0a0a0] pb-px pl-[7px] text-[10px]">
      {menu.map(([before, key, after]) => (
        <button key={after} type="button">{before}<u>{key}</u>{after}</button>
      ))}
    </nav>
  );
}

function TaskBar() {
  return (
    <div className="flex h-[7px] flex-auto gap-[2px] overflow-hidden border-t border-[#333] bg-linear-to-r from-[#222] via-[#8a8a8a] to-[#222]">
      <span className="mr-3 ml-2 h-7 w-10 rounded-full bg-[#9bb4cc]" />
      <span className="w-[52px] rounded-t-sm bg-[#aaa]" />
      <span className="ml-[6px] flex w-[60px] justify-center rounded-t-sm bg-[#999]"><span className="mt-[2px] h-8 w-8 rounded-full bg-[#0aa4e8]" /></span>
      <span className="flex w-[60px] justify-center rounded-t-sm bg-[#999]"><span className="mt-[3px] h-8 w-8 rounded-full bg-[#c85a48]" /></span>
      <span className="flex w-[54px] justify-center rounded-t-sm bg-[#bbb]"><span className="mt-[2px] h-8 w-7 border border-[#2a6ab0] bg-[#cfe3f8]" /></span>
      <span className="ml-1 flex w-[58px] justify-center rounded-t-sm bg-[#ddd]"><span className="mt-[2px] h-8 w-8 bg-white" /></span>
    </div>
  );
}

export default function App() {
  return (
    <div className="relative flex min-h-screen flex-col overflow-hidden bg-[#f0f0f0] font-['Open_Sans',sans-serif] text-[11px] leading-[15px] text-black">
      <TitleBar />
      <div className="mr-1 border-r border-[#555]">
        <MenuBar />
        <StandardToolbar />
        <DrawingToolbar />
        <div className="flex border-t border-[#808080]">
          <aside className="flex w-[188px] shrink-0 flex-col">
            <MarketWatch />
            <Navigator />
          </aside>
          <Workspace />
        </div>
        <Terminal />
        <StatusBar />
      </div>
      <TaskBar />
      <MacdTooltip />
    </div>
  );
}
